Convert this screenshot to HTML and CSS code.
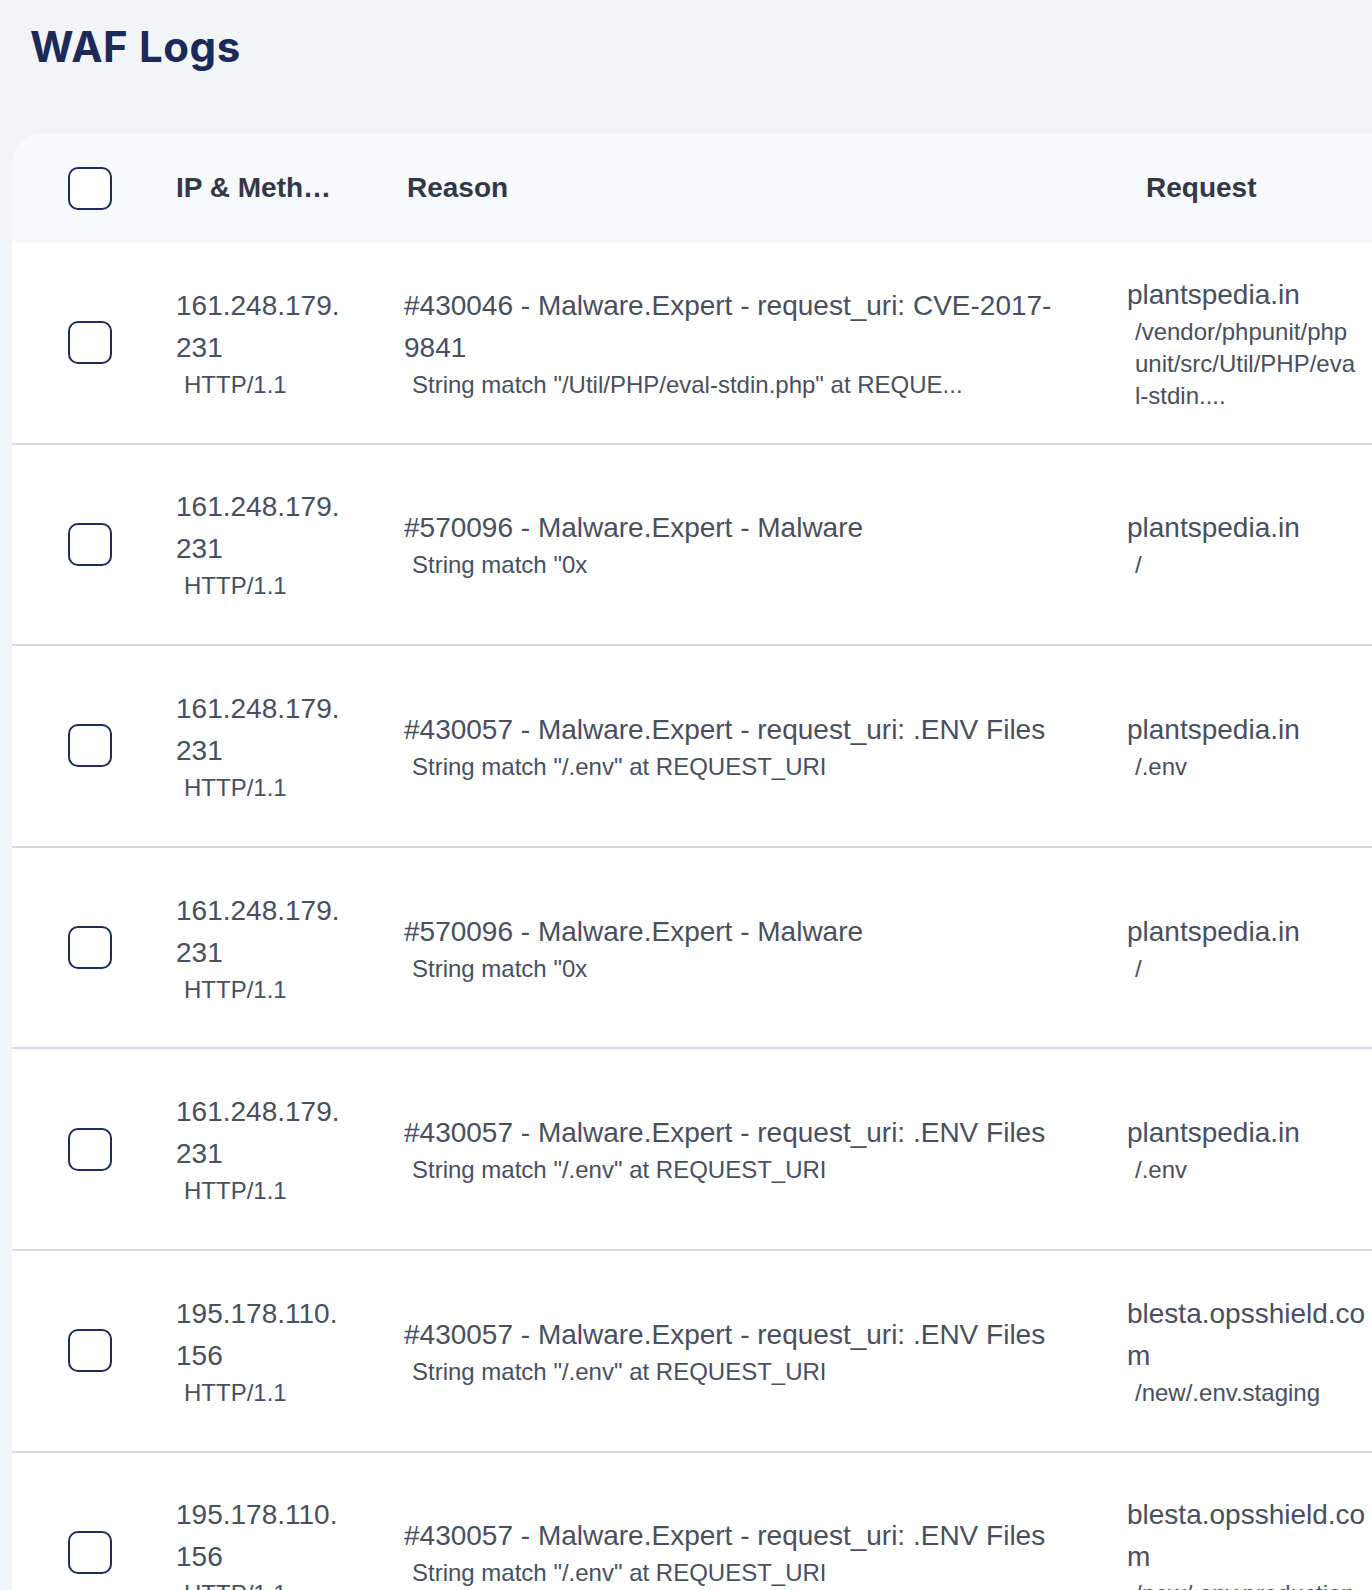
FILE: index.html
```html
<!DOCTYPE html>
<html lang="en">
<head>
<meta charset="utf-8">
<title>WAF Logs</title>
<link rel="stylesheet" href="styles.css">
</head>
<body>
<h1 class="title">WAF Logs</h1>
<div class="card">
  <div class="row head">
    <div class="c-check"><span class="box"></span></div>
    <div class="c-ip"><span class="th th-ip">IP &amp; Method</span></div>
    <div class="c-reason"><span class="th th-reason">Reason</span></div>
    <div class="c-req"><span class="th th-req">Request</span></div>
  </div>

  <div class="row">
    <div class="c-check"><span class="box"></span></div>
    <div class="c-ip"><div class="main">161.248.179.231</div><div class="sub">HTTP/1.1</div></div>
    <div class="c-reason"><div class="main">#430046 - Malware.Expert - request_uri: CVE-2017-<wbr>9841</div><div class="sub">String match "/Util/PHP/eval-stdin.php" at REQUE...</div></div>
    <div class="c-req"><div class="main">plantspedia.in</div><div class="sub">/vendor/phpunit/phpunit/src/Util/PHP/eval-stdin....</div></div>
  </div>

  <div class="row">
    <div class="c-check"><span class="box"></span></div>
    <div class="c-ip"><div class="main">161.248.179.231</div><div class="sub">HTTP/1.1</div></div>
    <div class="c-reason"><div class="main">#570096 - Malware.Expert - Malware</div><div class="sub">String match "0x</div></div>
    <div class="c-req"><div class="main">plantspedia.in</div><div class="sub">/</div></div>
  </div>

  <div class="row">
    <div class="c-check"><span class="box"></span></div>
    <div class="c-ip"><div class="main">161.248.179.231</div><div class="sub">HTTP/1.1</div></div>
    <div class="c-reason"><div class="main">#430057 - Malware.Expert - request_uri: .ENV Files</div><div class="sub">String match "/.env" at REQUEST_URI</div></div>
    <div class="c-req"><div class="main">plantspedia.in</div><div class="sub">/.env</div></div>
  </div>

  <div class="row">
    <div class="c-check"><span class="box"></span></div>
    <div class="c-ip"><div class="main">161.248.179.231</div><div class="sub">HTTP/1.1</div></div>
    <div class="c-reason"><div class="main">#570096 - Malware.Expert - Malware</div><div class="sub">String match "0x</div></div>
    <div class="c-req"><div class="main">plantspedia.in</div><div class="sub">/</div></div>
  </div>

  <div class="row">
    <div class="c-check"><span class="box"></span></div>
    <div class="c-ip"><div class="main">161.248.179.231</div><div class="sub">HTTP/1.1</div></div>
    <div class="c-reason"><div class="main">#430057 - Malware.Expert - request_uri: .ENV Files</div><div class="sub">String match "/.env" at REQUEST_URI</div></div>
    <div class="c-req"><div class="main">plantspedia.in</div><div class="sub">/.env</div></div>
  </div>

  <div class="row">
    <div class="c-check"><span class="box"></span></div>
    <div class="c-ip"><div class="main">195.178.110.156</div><div class="sub">HTTP/1.1</div></div>
    <div class="c-reason"><div class="main">#430057 - Malware.Expert - request_uri: .ENV Files</div><div class="sub">String match "/.env" at REQUEST_URI</div></div>
    <div class="c-req"><div class="main">blesta.opsshield.com</div><div class="sub">/new/.env.staging</div></div>
  </div>

  <div class="row">
    <div class="c-check"><span class="box"></span></div>
    <div class="c-ip"><div class="main">195.178.110.156</div><div class="sub">HTTP/1.1</div></div>
    <div class="c-reason"><div class="main">#430057 - Malware.Expert - request_uri: .ENV Files</div><div class="sub">String match "/.env" at REQUEST_URI</div></div>
    <div class="c-req"><div class="main">blesta.opsshield.com</div><div class="sub">/new/.env.production</div></div>
  </div>
</div>
</body>
</html>
```
FILE: styles.css
```css
html, body {
  margin: 0;
  padding: 0;
}
body {
  background: #f3f4f6;
  font-family: "Liberation Sans", Arial, sans-serif;
  overflow: hidden;
}
.title {
  margin: 0;
  padding: 22px 0 0 30px;
  font-family: Inter, "Noto Sans", sans-serif;
  font-size: 42px;
  line-height: 50px;
  font-weight: 700;
  letter-spacing: 0.6px;
  color: #1c2a58;
}
.card {
  margin: 61px 0 0 12px;
  background: #ffffff;
  border-top-left-radius: 32px;
  overflow: hidden;
}
.row {
  display: flex;
  align-items: center;
  height: 201.6px;
  box-sizing: border-box;
  border-bottom: 2px solid #d6d9e3;
  padding-left: 56px;
}
.row.head {
  height: 110px;
  background: #f8f9fb;
  border-bottom: 0;
}
.c-check {
  flex: none;
  width: 44px;
}
.box {
  display: block;
  width: 44px;
  height: 43px;
  box-sizing: border-box;
  border: 2px solid #1e2c57;
  border-radius: 10px;
  background: #ffffff;
}
.c-ip {
  flex: none;
  width: 168px;
  margin-left: 64px;
  word-break: break-all;
}
.c-reason {
  flex: none;
  width: 660px;
  margin-left: 60px;
}
.c-req {
  flex: none;
  width: 240px;
  margin-left: 63px;
  word-break: break-all;
}
.main {
  font-size: 28px;
  line-height: 42px;
  color: #4a4f5d;
}
.sub {
  font-size: 24px;
  line-height: 32px;
  padding-left: 8px;
  color: #4a4f5d;
}
.c-req .sub {
  padding-right: 8px;
}
.th {
  display: block;
  font-size: 28px;
  line-height: 42px;
  font-weight: 700;
  color: #323846;
  white-space: nowrap;
  overflow: hidden;
  text-overflow: ellipsis;
}
.th-ip {
  max-width: 158px;
}
.th-reason {
  padding-left: 3px;
}
.th-req {
  padding-left: 19px;
}
```
